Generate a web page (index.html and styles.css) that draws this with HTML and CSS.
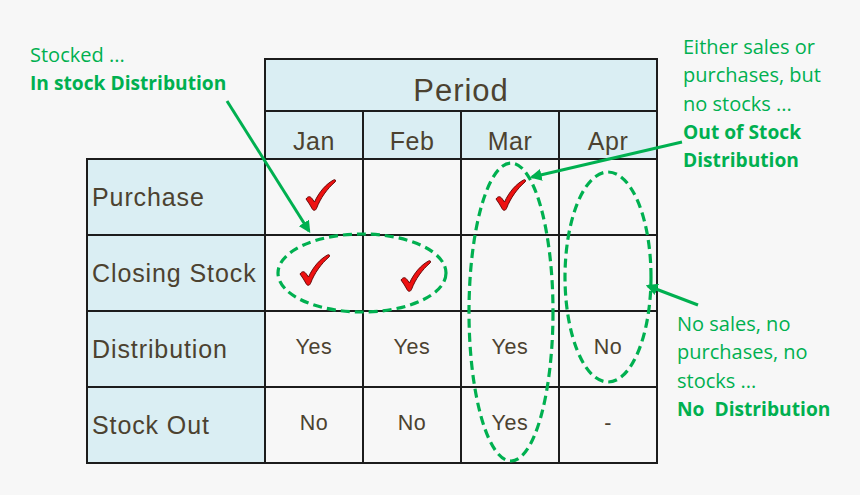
FILE: index.html
```html
<!DOCTYPE html>
<html>
<head>
<meta charset="utf-8">
<link rel="stylesheet" href="styles.css">
</head>
<body>
<div class="stage">
  <table class="grid">
    <colgroup><col class="c-label"><col class="c-m"><col class="c-m"><col class="c-m"><col class="c-m"></colgroup>
    <tr class="r-period"><td class="corner" rowspan="2"></td><th class="period" colspan="4">Period</th></tr>
    <tr class="r-month"><th class="month">Jan</th><th class="month">Feb</th><th class="month">Mar</th><th class="month">Apr</th></tr>
    <tr class="r-data">
      <th class="label">Purchase</th>
      <td class="cell"><svg class="tick shift-r" viewBox="0 0 32 32"><path d="M2 20 C4 17 6 17 8 19.5 L10.5 23 C15 13 22 5 29.5 1 C31.5 0 32.3 1.6 31 3 C23 10 16.5 19 12.5 29.5 C11.5 31.8 9.3 31.8 8.3 30 C6.5 26.5 4.5 23.5 2 20 Z"/></svg></td>
      <td class="cell"></td>
      <td class="cell"><svg class="tick" viewBox="0 0 32 32"><path d="M2 20 C4 17 6 17 8 19.5 L10.5 23 C15 13 22 5 29.5 1 C31.5 0 32.3 1.6 31 3 C23 10 16.5 19 12.5 29.5 C11.5 31.8 9.3 31.8 8.3 30 C6.5 26.5 4.5 23.5 2 20 Z"/></svg></td>
      <td class="cell"></td>
    </tr>
    <tr class="r-data">
      <th class="label">Closing Stock</th>
      <td class="cell"><svg class="tick up" viewBox="0 0 32 32"><path d="M2 20 C4 17 6 17 8 19.5 L10.5 23 C15 13 22 5 29.5 1 C31.5 0 32.3 1.6 31 3 C23 10 16.5 19 12.5 29.5 C11.5 31.8 9.3 31.8 8.3 30 C6.5 26.5 4.5 23.5 2 20 Z"/></svg></td>
      <td class="cell"><svg class="tick down" viewBox="0 0 32 32"><path d="M2 20 C4 17 6 17 8 19.5 L10.5 23 C15 13 22 5 29.5 1 C31.5 0 32.3 1.6 31 3 C23 10 16.5 19 12.5 29.5 C11.5 31.8 9.3 31.8 8.3 30 C6.5 26.5 4.5 23.5 2 20 Z"/></svg></td>
      <td class="cell"></td>
      <td class="cell"></td>
    </tr>
    <tr class="r-data">
      <th class="label">Distribution</th>
      <td class="cell">Yes</td><td class="cell">Yes</td><td class="cell">Yes</td><td class="cell">No</td>
    </tr>
    <tr class="r-data">
      <th class="label">Stock Out</th>
      <td class="cell">No</td><td class="cell">No</td><td class="cell">Yes</td><td class="cell">-</td>
    </tr>
  </table>

  <div class="note note-left">
    <div>Stocked ...</div>
    <div class="strong">In stock Distribution</div>
  </div>
  <div class="note note-right-top">
    <div>Either sales or</div>
    <div>purchases, but</div>
    <div>no stocks ...</div>
    <div class="strong">Out of Stock</div>
    <div class="strong">Distribution</div>
  </div>
  <div class="note note-right-bottom">
    <div>No sales, no</div>
    <div>purchases, no</div>
    <div>stocks ...</div>
    <div class="strong">No&nbsp; Distribution</div>
  </div>

  <svg class="overlay" viewBox="0 0 860 495" width="860" height="495">
    <defs>
      <marker id="ah" viewBox="0 0 10 10" refX="8" refY="5" markerWidth="4" markerHeight="4" orient="auto-start-reverse">
        <path d="M0 0 L10 5 L0 10 Z" fill="#00b050"/>
      </marker>
    </defs>
    <ellipse class="ring" cx="362" cy="273" rx="84" ry="39"/>
    <ellipse class="ring" cx="511" cy="312" rx="42" ry="149"/>
    <ellipse class="ring" cx="608" cy="277" rx="43" ry="105"/>
    <line class="arrow" x1="227" y1="101" x2="309" y2="231" marker-end="url(#ah)"/>
    <line class="arrow" x1="682" y1="142" x2="532" y2="177" marker-end="url(#ah)"/>
    <line class="arrow" x1="698" y1="305" x2="648" y2="286" marker-end="url(#ah)"/>
  </svg>
</div>
</body>
</html>
```

FILE: styles.css
```css
html, body {
  margin: 0;
  padding: 0;
  background: #f7f7f7;
}

.stage {
  position: relative;
  width: 860px;
  height: 495px;
  padding: 58px 0 0 86px;
  box-sizing: border-box;
  overflow: hidden;
}

.grid {
  border-collapse: collapse;
  table-layout: fixed;
  width: 572px;
  font-family: "Liberation Sans", Arial, sans-serif;
  color: #4c4230;
}

.c-label { width: 178px; }
.c-m { width: 98px; }

.grid th, .grid td {
  border: 2px solid #1c1c1c;
  padding: 0;
  font-weight: normal;
}

.grid .corner {
  border: none;
  background: transparent;
}

.r-period { height: 52px; }
.r-month { height: 48px; }
.r-data { height: 76px; }

.grid .period {
  background: #daeef3;
  font-size: 31px;
  letter-spacing: 1px;
  text-align: center;
  padding-top: 12px;
}

.grid .month {
  background: #daeef3;
  font-size: 25px;
  letter-spacing: 0.5px;
  text-align: center;
  padding-top: 12px;
}

.grid .label {
  background: #daeef3;
  font-size: 25px;
  letter-spacing: 0.9px;
  text-align: left;
  padding-left: 4px;
}

.grid .cell {
  background: #f7f7f7;
  font-size: 21.5px;
  letter-spacing: 0.6px;
  text-align: center;
  padding-bottom: 4px;
}

.tick {
  width: 32px;
  height: 32px;
  display: block;
  margin: 0 auto;
  position: relative;
}
.tick path {
  fill: #ee1111;
  stroke: #5a0000;
  stroke-width: 0.9;
  stroke-linejoin: round;
}
.tick.shift-r { left: 6px; }
.tick.up { top: -1px; }
.tick.down { top: 5px; left: 3px; }

.note {
  position: absolute;
  font-family: "Open Sans", "Noto Sans", sans-serif;
  font-size: 20px;
  line-height: 28.3px;
  color: #00b050;
  white-space: nowrap;
}
.note .strong {
  font-weight: bold;
  font-size: 19.2px;
}
.note-left { left: 30px; top: 41px; }
.note-right-top { left: 683px; top: 33px; }
.note-right-bottom { left: 677px; top: 310px; }

.overlay {
  position: absolute;
  left: 0;
  top: 0;
  pointer-events: none;
}
.ring {
  fill: none;
  stroke: #00b050;
  stroke-width: 3.2;
  stroke-dasharray: 9 5;
}
.arrow {
  stroke: #00b050;
  stroke-width: 3;
}
```
